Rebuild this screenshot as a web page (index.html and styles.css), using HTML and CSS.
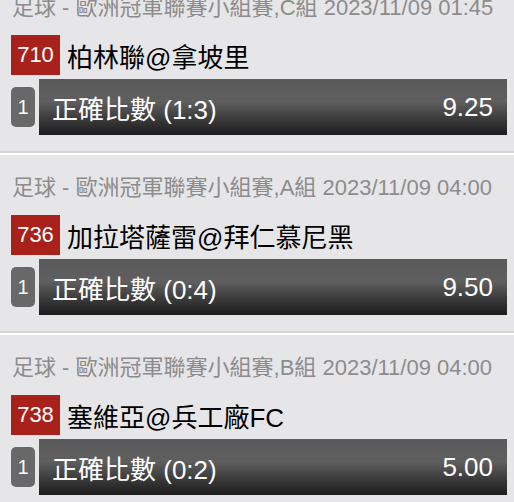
FILE: index.html
```html
<!DOCTYPE html>
<html>
	<head>
		<meta charset="UTF-8">
		<title>投注單</title>
		<link rel="stylesheet" href="styles.css">
	</head>
	<body>
		<div class="list">
			<div class="bet">
				<div class="league">足球 - 歐洲冠軍聯賽小組賽,C組 2023/11/09 01:45</div>
				<div class="match">
					<span class="no">710</span>
					<span class="teams">柏林聯@拿坡里</span>
				</div>
				<div class="pick">
					<span class="count">1</span>
					<div class="bar">
						<span class="label">正確比數 (1:3)</span>
						<span class="odds">9.25</span>
					</div>
				</div>
			</div>
			<div class="bet">
				<div class="league">足球 - 歐洲冠軍聯賽小組賽,A組 2023/11/09 04:00</div>
				<div class="match">
					<span class="no">736</span>
					<span class="teams">加拉塔薩雷@拜仁慕尼黑</span>
				</div>
				<div class="pick">
					<span class="count">1</span>
					<div class="bar">
						<span class="label">正確比數 (0:4)</span>
						<span class="odds">9.50</span>
					</div>
				</div>
			</div>
			<div class="bet">
				<div class="league">足球 - 歐洲冠軍聯賽小組賽,B組 2023/11/09 04:00</div>
				<div class="match">
					<span class="no">738</span>
					<span class="teams">塞維亞@兵工廠FC</span>
				</div>
				<div class="pick">
					<span class="count">1</span>
					<div class="bar">
						<span class="label">正確比數 (0:2)</span>
						<span class="odds">5.00</span>
					</div>
				</div>
			</div>
		</div>
	</body>
</html>
```

FILE: styles.css
```css
*{
	margin: 0;
	padding: 0;
	box-sizing: border-box;
}
html, body{
	background: #e6e6e8;
	overflow: hidden;
}
body{
	font-family: "Liberation Sans", "Noto Sans CJK TC", sans-serif;
}
.list{
	margin-top: -24px;
}
.bet{
	padding: 20px 7px 16px 11px;
	border-bottom: 2px solid #d6d6d8;
	box-shadow: 0 2px 0 #fff;
	margin-bottom: 2px;
}
.bet:first-child{
	padding-top: 19px;
}
.league{
	height: 26px;
	line-height: 26px;
	font-size: 22px;
	color: #8c8c8c;
	white-space: nowrap;
	padding-left: 1px;
}
.match{
	display: flex;
	align-items: center;
	margin-top: 14px;
	height: 40px;
}
.no{
	width: 49px;
	height: 40px;
	line-height: 40px;
	background: #a8211a;
	color: #fff;
	font-size: 22px;
	text-align: center;
}
.teams{
	margin-left: 7px;
	font-size: 26px;
	color: #000;
	white-space: nowrap;
}
.pick{
	display: flex;
	align-items: center;
	gap: 4px;
	margin-top: 4px;
}
.count{
	width: 24px;
	height: 40px;
	line-height: 40px;
	border-radius: 5px;
	background: #686868;
	color: #fff;
	font-size: 20px;
	text-align: center;
}
.bar{
	flex: 1;
	height: 56px;
	display: flex;
	align-items: center;
	justify-content: space-between;
	padding: 0 14px 0 13px;
	background: linear-gradient(#5a5a5a 0%, #5f5f5f 40%, #3c3c3c 70%, #1c1c1c 100%);
	color: #fff;
	font-size: 26px;
}
```
